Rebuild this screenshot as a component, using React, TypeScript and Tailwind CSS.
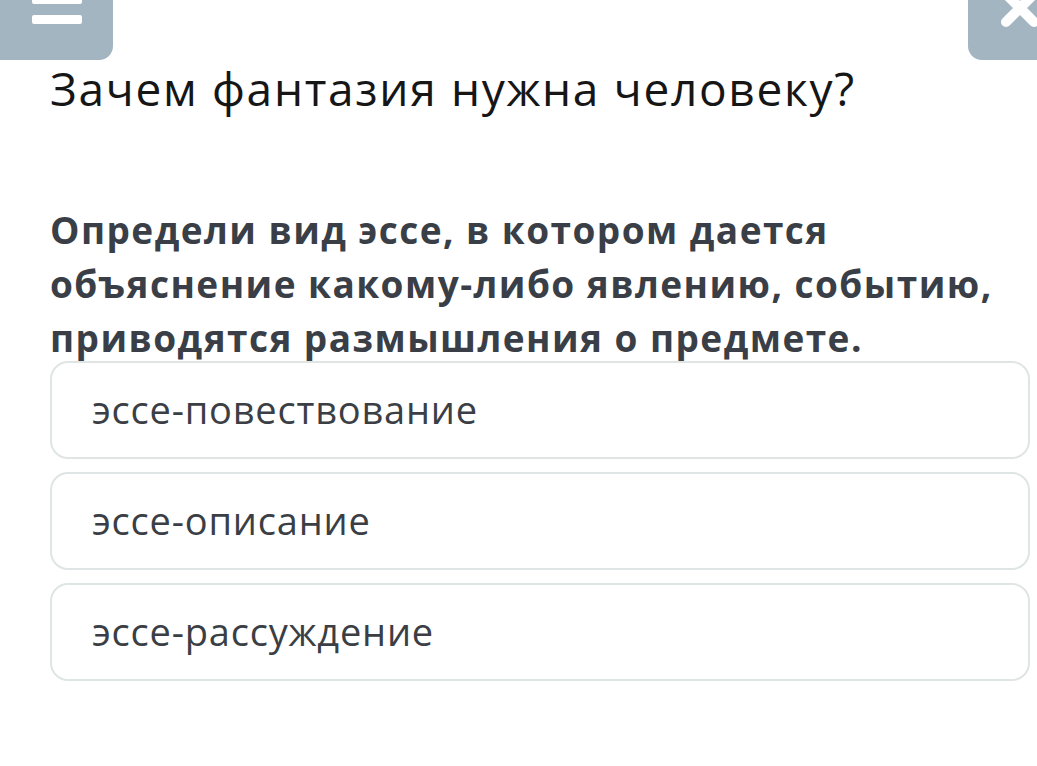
import React from 'react';

const options = ['эссе-повествование', 'эссе-описание', 'эссе-рассуждение'];

export default function App() {
  return (
    <div className="relative w-[1037px] h-[766px] bg-white overflow-hidden" style={{ fontFamily: '"Open Sans", sans-serif' }}>
      {/* top buttons */}
      <div className="absolute left-0 top-0 w-[113px] h-[60px] bg-[#a2b5c1] rounded-br-[14px]">
        <div className="absolute left-[32px] top-[-6px] w-[50px] h-[10px] bg-white rounded-[2px]" />
        <div className="absolute left-[32px] top-[15px] w-[50px] h-[9px] bg-white rounded-[2px]" />
      </div>
      <div className="absolute left-[968px] top-0 w-[80px] h-[60px] bg-[#a2b5c1] rounded-bl-[14px] overflow-hidden">
        <svg className="absolute left-[30px] top-[-14px]" width="44" height="44" viewBox="0 0 44 44">
          <path d="M8 8 L36 36 M36 8 L8 36" stroke="white" strokeWidth="10" strokeLinecap="round" />
        </svg>
      </div>

      <div className="pl-[50px] pr-[7px] pt-[58px] flex flex-col">
        <h1 className="text-[46px] leading-[60px] tracking-[1.7px] text-[#161616] font-normal">Зачем фантазия нужна человеку?</h1>
        <p className="mt-[85px] text-[37px] leading-[54px] tracking-[1.45px] font-bold text-[#3a3f47]">
          Определи вид эссе, в котором дается объяснение какому-либо явлению, событию, приводятся размышления о предмете.
        </p>
        <div className="-mt-[4px] flex flex-col gap-[13px]">
          {options.map((o) => (
            <div key={o} className="h-[98px] border-2 border-[#dfe4e4] rounded-[18px] pl-[40px] flex items-center pb-[2px]">
              <span className="text-[38px] tracking-[0.8px] text-[#3b3f45]">{o}</span>
            </div>
          ))}
        </div>
      </div>
    </div>
  );
}
